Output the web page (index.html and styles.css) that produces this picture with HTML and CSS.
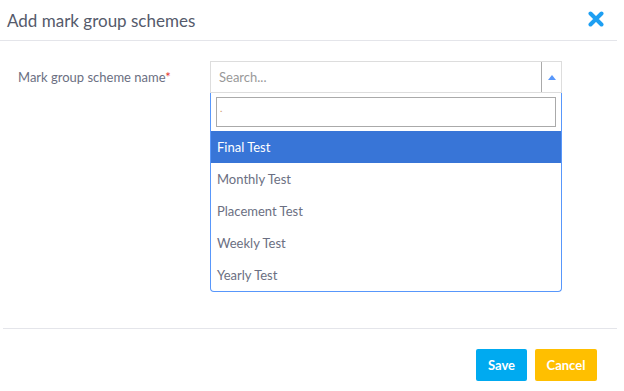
FILE: index.html
```html
<!DOCTYPE html>
<html>
<head>
<meta charset="utf-8">
<link rel="stylesheet" href="styles.css">
</head>
<body>
<div class="modal">
  <div class="modal-header">
    <h4 class="modal-title">Add mark group schemes</h4>
    <button class="close" aria-label="Close">
      <svg width="16" height="16" viewBox="0 0 16 16"><path d="M2.5 2.5 L13.5 13.5 M13.5 2.5 L2.5 13.5" stroke="#1e9ff2" stroke-width="4" stroke-linecap="round"/></svg>
    </button>
  </div>
  <div class="modal-body">
    <div class="form-row">
      <label class="field-label">Mark group scheme name<span class="req">*</span></label>
      <div class="select">
        <div class="select-box">
          <span class="placeholder">Search...</span>
          <span class="arrow"><span class="tri"></span></span>
        </div>
        <div class="dropdown">
          <div class="search-wrap"><div class="search-input"><span class="caret-dot">.</span></div></div>
          <ul class="options">
            <li class="opt active">Final Test</li>
            <li class="opt">Monthly Test</li>
            <li class="opt">Placement Test</li>
            <li class="opt">Weekly Test</li>
            <li class="opt">Yearly Test</li>
          </ul>
        </div>
      </div>
    </div>
  </div>
  <div class="modal-footer">
    <button class="btn btn-save">Save</button>
    <button class="btn btn-cancel">Cancel</button>
  </div>
</div>
</body>
</html>
```
FILE: styles.css
```css
html, body {
  margin: 0;
  padding: 0;
  background: #fff;
}
body {
  font-family: "Lato", "Noto Sans", sans-serif;
  color: #6b6f82;
}
.modal {
  width: 617px;
  box-sizing: border-box;
}
.modal-header {
  height: 40px;
  border-bottom: 1px solid #e4e5ea;
  display: flex;
  align-items: center;
  justify-content: space-between;
  padding: 0 13px 0 7px;
  box-sizing: content-box;
}
.modal-title {
  margin: 0;
  font-size: 17px;
  font-weight: 400;
  color: #555a6b;
}
.close {
  border: 0;
  background: none;
  padding: 0;
  width: 16px;
  height: 16px;
  display: flex;
  margin-top: -3px;
}
.modal-body {
  height: 287px;
  padding: 20px 0 0 18px;
  box-sizing: border-box;
}
.form-row {
  display: flex;
  align-items: flex-start;
}
.field-label {
  width: 192px;
  font-size: 13px;
  color: #6b6f82;
  line-height: 32px;
}
.req {
  color: #e3342f;
}
.select {
  width: 352px;
}
.select-box {
  height: 32px;
  border: 1px solid #ddd;
  box-sizing: border-box;
  display: flex;
  align-items: center;
}
.placeholder {
  flex: 1;
  padding-left: 8px;
  font-size: 13px;
  color: #999;
}
.arrow {
  width: 19px;
  height: 30px;
  border-left: 1px solid #aaa;
  display: flex;
  align-items: center;
  justify-content: center;
}
.tri {
  width: 0;
  height: 0;
  border-left: 4px solid transparent;
  border-right: 4px solid transparent;
  border-bottom: 5px solid #5897fb;
}
.dropdown {
  border: 1px solid #5897fb;
  border-top: 0;
  border-radius: 0 0 4px 4px;
  height: 199px;
  box-sizing: border-box;
}
.search-wrap {
  padding: 4px 5px;
}
.search-input {
  height: 30px;
  border: 1px solid #aaa;
  box-sizing: border-box;
  font-size: 10px;
  color: #c47a3a;
  padding: 2px 0 0 3px;
  line-height: 16px;
}
.caret-dot {
  opacity: 0.8;
}
.options {
  list-style: none;
  margin: 0;
  padding: 0;
}
.opt {
  height: 32px;
  line-height: 32px;
  padding-left: 6px;
  font-size: 13px;
  color: #6b6f82;
}
.opt.active {
  background: #3875d7;
  color: #fff;
}
.modal-footer {
  margin-left: 3px;
  border-top: 1px solid #e4e5ea;
  padding: 20px 20px 0 0;
  display: flex;
  justify-content: flex-end;
  gap: 8px;
}
.btn {
  border: 0;
  height: 32px;
  border-radius: 2px;
  color: #fff;
  font-family: "Lato", "Noto Sans", sans-serif;
  font-size: 13px;
  font-weight: 700;
  padding: 0;
}
.btn-save {
  width: 51px;
  background: #00aaf0;
}
.btn-cancel {
  width: 62px;
  background: #ffbf00;
}
```
